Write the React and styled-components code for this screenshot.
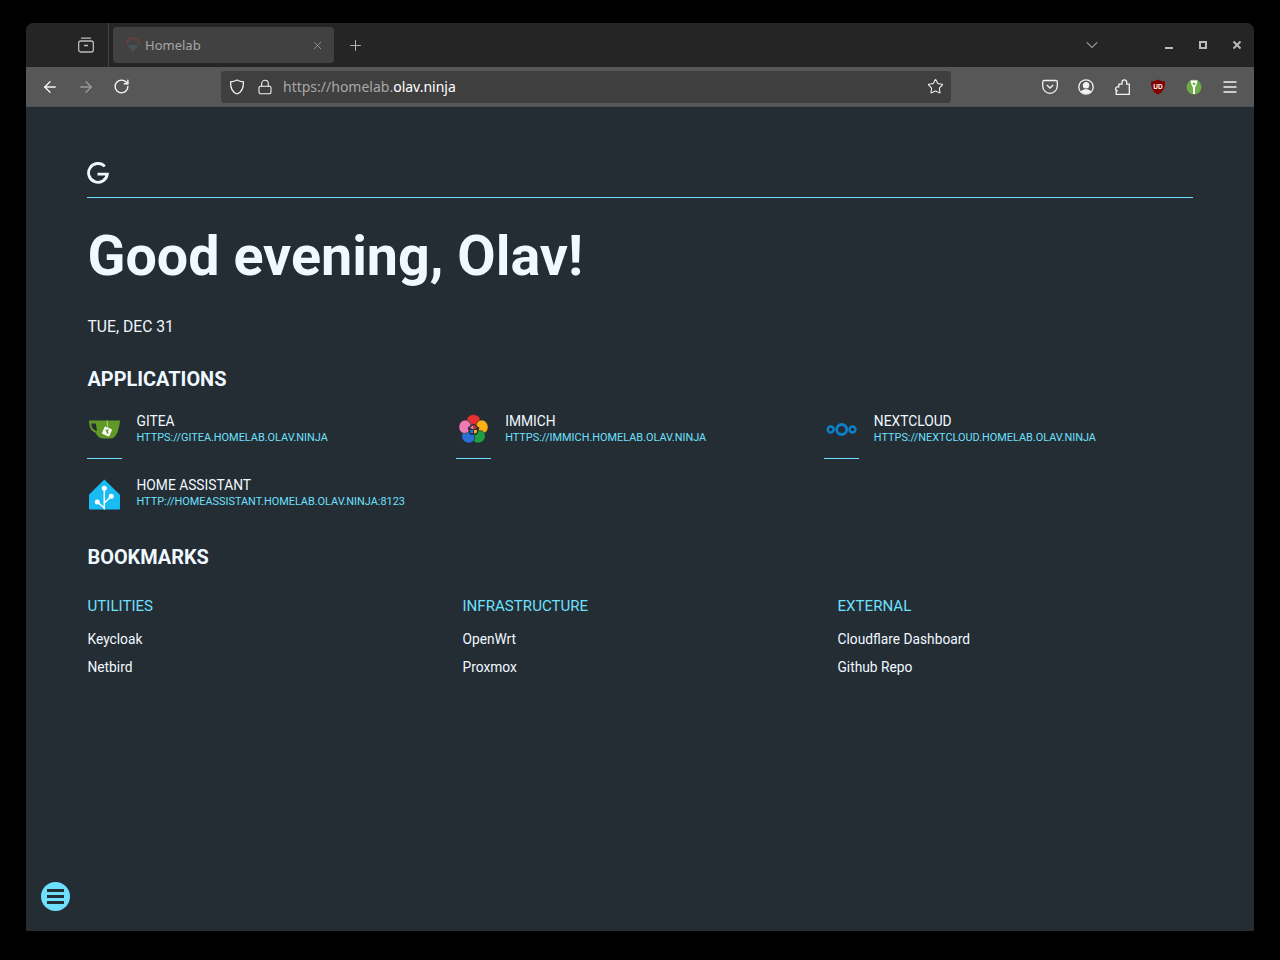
import React from 'react';
import styled, { createGlobalStyle } from 'styled-components';
import { ArrowLeft, ArrowRight, RotateCw, Lock, Star, Plus, X, ChevronDown } from 'lucide-react';

const ACCENT = '#6ee0fd';
const PAGE_BG = '#242c34';
const TEXT = '#f0f9ff';

const GlobalStyle = createGlobalStyle`
  * { margin: 0; padding: 0; box-sizing: border-box; }
  html, body { background: #000; }
  body { font-family: 'Roboto', sans-serif; -webkit-font-smoothing: antialiased; }
`;

const Screen = styled.div`
  width: 1280px;
  height: 960px;
  padding: 23px 26px 29px;
  background: #000;
`;

const Window = styled.div`
  height: 100%;
  display: flex;
  flex-direction: column;
  border-radius: 8px 8px 0 0;
  overflow: hidden;
  background: ${PAGE_BG};
`;

const TitleBar = styled.div`
  height: 44px;
  flex: none;
  display: flex;
  align-items: center;
  background: #252525;
  color: #bdbdbd;
`;

const PinnedArea = styled.div`
  width: 83px;
  height: 100%;
  flex: none;
  display: flex;
  align-items: center;
  justify-content: flex-end;
  padding-right: 14px;
  border-right: 1px solid #414141;
`;

const Tab = styled.div`
  width: 221px;
  height: 36px;
  margin-left: 4px;
  padding: 0 10px 0 12px;
  display: flex;
  align-items: center;
  gap: 4px;
  border-radius: 4px;
  background: #414141;
  color: #a6a6a6;
  font-family: 'Noto Sans', sans-serif;
  font-size: 13px;
`;

const TabLabel = styled.span`
  flex: 1;
`;

const NewTab = styled.div`
  margin-left: 13px;
  display: flex;
  color: #b4b4b4;
`;

const TitleRight = styled.div`
  margin-left: auto;
  display: flex;
  align-items: center;
  padding-right: 12px;
`;

const ListTabs = styled.div`
  display: flex;
  margin-right: 62px;
  color: #909090;
`;

const WinControls = styled.div`
  display: flex;
  align-items: center;
  gap: 24px;
  color: #bababa;
`;

const ToolBar = styled.div`
  height: 40px;
  flex: none;
  display: flex;
  align-items: center;
  padding-left: 15px;
  background: #575757;
  border-bottom: 1px solid #4f4f4f;
`;

const NavGroup = styled.div`
  width: 180px;
  flex: none;
  display: flex;
  align-items: center;
  gap: 18px;
`;

const NavIcon = styled.span`
  display: flex;
  color: ${p => (p.$dim ? '#9a9a9a' : '#f4f4f4')};
`;

const UrlBar = styled.div`
  width: 730px;
  height: 32px;
  flex: none;
  display: flex;
  align-items: center;
  padding: 0 7px 0 8px;
  border-radius: 4px;
  background: #3f3f3f;
  color: #f2f2f2;
`;

const UrlText = styled.div`
  flex: 1;
  margin-left: 10px;
  font-family: 'Noto Sans', sans-serif;
  font-size: 14px;
  color: #ffffff;
  white-space: nowrap;
`;

const UrlDim = styled.span`
  color: #a8a8a8;
`;

const UrlLockGap = styled.span`
  display: flex;
  margin-left: 12px;
`;

const ToolIcons = styled.div`
  margin-left: auto;
  padding-right: 16px;
  display: flex;
  align-items: center;
  gap: 20px;
  color: #f2f2f2;
`;

const Page = styled.main`
  position: relative;
  flex: 1;
  padding: 53px 61px 0;
  color: ${TEXT};
  background: ${PAGE_BG};
`;

const LogoRow = styled.div`
  height: 38px;
  padding-top: 2px;
  border-bottom: 1px solid ${ACCENT};
`;

const Greeting = styled.h1`
  margin-top: 26px;
  height: 64px;
  padding-left: 0.5px;
  font-size: 55.65px;
  line-height: 64px;
  font-weight: 700;
  color: ${TEXT};
`;

const DateLine = styled.div`
  margin-top: 29px;
  height: 20px;
  padding-left: 0.5px;
  font-size: 15.7px;
  line-height: 20px;
  color: ${TEXT};
`;

const SectionTitle = styled.h2`
  height: 26px;
  margin-top: ${p => p.$top}px;
  padding-left: 0.5px;
  font-size: 19.9px;
  line-height: 26px;
  font-weight: 700;
  color: ${TEXT};
`;

const AppGrid = styled.div`
  margin-top: 15px;
  display: grid;
  grid-template-columns: repeat(3, 1fr);
`;

const AppItem = styled.div`
  height: 64px;
  &:last-child::after { display: none; }
  &::after {
    content: '';
    display: block;
    width: 35px;
    height: 1px;
    margin-top: 10px;
    background: ${ACCENT};
  }
`;

const AppRow = styled.div`
  height: 40px;
  display: flex;
  align-items: center;
`;

const AppIcon = styled.div`
  width: 49.5px;
  flex: none;
  display: flex;
  padding: 2px 0 0 1px;
`;

const AppText = styled.div`
  align-self: flex-start;
  padding-top: 5px;
`;

const AppName = styled.div`
  font-size: 13.8px;
  line-height: 17px;
  font-weight: 400;
  color: ${TEXT};
`;

const AppUrl = styled.div`
  margin-top: 1px;
  font-size: 10.9px;
  line-height: 14px;
  color: ${ACCENT};
`;

const BookmarkGrid = styled.div`
  margin-top: 25px;
  padding-left: 0.5px;
  display: grid;
  grid-template-columns: repeat(3, 1fr);
  column-gap: 19.5px;
`;

const GroupTitle = styled.h3`
  margin-bottom: 9px;
  font-size: 15.1px;
  line-height: 20px;
  font-weight: 400;
  color: ${ACCENT};
`;

const BookmarkLink = styled.div`
  height: 28px;
  font-size: 13.75px;
  line-height: 28px;
  color: ${TEXT};
`;

const MenuButton = styled.div`
  position: absolute;
  left: 15px;
  bottom: 20px;
  width: 29px;
  height: 29px;
  border-radius: 50%;
  background: ${ACCENT};
  display: flex;
  flex-direction: column;
  align-items: center;
  justify-content: center;
  gap: 3px;
`;

const MenuBar = styled.span`
  width: 17px;
  height: 3px;
  background: ${PAGE_BG};
`;

const apps = [
  { name: 'Gitea', url: 'https://gitea.homelab.olav.ninja', Icon: GiteaIcon },
  { name: 'Immich', url: 'https://immich.homelab.olav.ninja', Icon: ImmichIcon },
  { name: 'Nextcloud', url: 'https://nextcloud.homelab.olav.ninja', Icon: NextcloudIcon },
  { name: 'Home Assistant', url: 'http://homeassistant.homelab.olav.ninja:8123', Icon: HomeAssistantIcon },
];

const bookmarks = [
  { title: 'Utilities', links: ['Keycloak', 'Netbird'] },
  { title: 'Infrastructure', links: ['OpenWrt', 'Proxmox'] },
  { title: 'External', links: ['Cloudflare Dashboard', 'Github Repo'] },
];

const petalColors = ['#e8322f', '#fbb116', '#1f9e45', '#2a6fd6', '#ef7bb4'];

function LogoG() {
  return (
    <svg width="22" height="22" viewBox="0 0 22 22" fill="none" stroke={TEXT} strokeWidth="2.8" style={{ display: 'block' }}>
      <path d="M17.8 4.400A9.400 9.400 0 1 0 20.300 12.200H10.500" />
    </svg>
  );
}

function GiteaIcon() {
  return (
    <svg width="33" height="33" viewBox="0 0 33 33">
      <path d="M1 7.500H32C31.500 14 29 25.500 23 25.500H15C11 25.500 9 22.500 7.300 19.500 3 18.500 1 14 1 7.500z" fill="#609926" />
      <path d="M3.300 10.600H7.800L9 18C5.500 17.500 3.300 14 3.300 10.600z" fill={PAGE_BG} />
      <path d="M19 7.500l.5 6" stroke="#dfe8d2" strokeWidth="0.700" />
      <rect x="15" y="14.500" width="8" height="8" rx="1.200" fill="#fff" transform="rotate(24 19 18.500)" />
      <path d="M17.700 16.600l2.600 3.800M20.200 16.200l-1.200 4.400" stroke="#609926" strokeWidth="1.100" />
    </svg>
  );
}

function ImmichIcon() {
  return (
    <svg width="33" height="33" viewBox="0 0 33 33">
      {petalColors.map((color, i) => (
        <ellipse key={color} cx="16.500" cy="7.500" rx="6.800" ry="6" fill={color} stroke={PAGE_BG} strokeWidth="0.600" transform={`rotate(${i * 72} 16.500 16.500)`} />
      ))}
      <path d="M16.500 10.500l5.900 4.300-2.300 6.900h-7.200l-2.300-6.900z" fill={PAGE_BG} />
      <path d="M16.500 12l-3.800 2.800 3.800 1.700z" fill="#ef7bb4" />
      <path d="M16.500 12l3.800 2.800-3.800 1.700z" fill="#e8322f" />
      <path d="M17 17h3.300l-1 3.300h-2.300z" fill="#fbb116" />
      <path d="M16 17h-3.300l1 3.300h2.300z" fill="#2a6fd6" />
    </svg>
  );
}

function NextcloudIcon() {
  return (
    <svg width="33" height="33" viewBox="0 0 33 33" fill="none" stroke="#0b82c9">
      <circle cx="16.700" cy="16.500" r="5" strokeWidth="2.800" />
      <circle cx="5.700" cy="16.500" r="3" strokeWidth="2.400" />
      <circle cx="27.500" cy="16.500" r="3" strokeWidth="2.400" />
    </svg>
  );
}

function HomeAssistantIcon() {
  return (
    <svg width="33" height="33" viewBox="0 0 33 33">
      <path d="M16.300 2.500L32 17.800V31.500a1 1 0 0 1-1 1H2a1 1 0 0 1-1-1V17.800z" fill="#18bcf2" />
      <path d="M16.300 11v21.500M16.300 31l-7-6M16.300 26l7-6.800" stroke="#fff" strokeWidth="1.500" fill="none" />
      <circle cx="16.300" cy="11.200" r="2.500" fill="#fff" />
      <circle cx="9.300" cy="25" r="2.500" fill="#fff" />
      <circle cx="23.300" cy="19.200" r="2.500" fill="#fff" />
    </svg>
  );
}

function TabFavicon() {
  return (
    <svg width="16" height="16" viewBox="0 0 16 16" fill="none" opacity="0.65">
      <path d="M2 7a6 6 0 0 1 12 0" stroke="#7a4040" strokeWidth="2" />
      <path d="M2 8h12l-6 7z" fill="#4a5a66" />
    </svg>
  );
}

function FirefoxView() {
  return (
    <svg width="16" height="16" viewBox="0 0 16 16" fill="none" stroke="#bdbdbd" strokeWidth="1.300">
      <path d="M3 1.200h10" />
      <rect x="0.700" y="4" width="14.600" height="11" rx="2" />
      <path d="M6 8.500h4" />
    </svg>
  );
}

function ShieldIcon() {
  return (
    <svg width="16" height="16" viewBox="0 0 16 16" fill="none" stroke="currentColor" strokeWidth="1.300">
      <path d="M8 1c2 1.200 4 1.700 6.400 1.900.2 6-1.800 10.300-6.400 12.100C3.400 13.200 1.400 8.900 1.600 2.900 4 2.700 6 2.200 8 1z" />
    </svg>
  );
}

function PocketIcon() {
  return (
    <svg width="16" height="16" viewBox="0 0 16 16" fill="none" stroke="currentColor" strokeWidth="1.300">
      <path d="M2 1.500h12a1.300 1.300 0 0 1 1.300 1.300V7a7.300 7.300 0 0 1-14.600 0V2.800A1.300 1.300 0 0 1 2 1.500z" />
      <path d="M4.800 6L8 9l3.200-3" />
    </svg>
  );
}

function AccountIcon() {
  return (
    <svg width="16" height="16" viewBox="0 0 16 16" fill="none" stroke="currentColor" strokeWidth="1.300">
      <circle cx="8" cy="8" r="7.200" />
      <circle cx="8" cy="6.300" r="2.600" fill="currentColor" />
      <path d="M2.900 12.600C4 10.800 6 10.300 8 10.300s4 .5 5.100 2.300C12 14 10 15 8 15s-4-1-5.100-2.400z" fill="currentColor" stroke="none" />
    </svg>
  );
}

function ExtensionIcon() {
  return (
    <svg width="16" height="16" viewBox="0 0 16 16" fill="none" stroke="currentColor" strokeWidth="1.300">
      <path d="M2.200 15.300H15.300V5.200H12.700V3.300C12.700 0 8 0 8 3.300V5.200H4.800V7.800H3.800C.9 7.800.9 11.800 3.800 11.800H2.200z" />
    </svg>
  );
}

function UBlockIcon() {
  return (
    <svg width="16" height="16" viewBox="0 0 16 16">
      <path d="M8 .5c2.200 1.300 4.300 1.800 7 2 .1 6.400-2 10.700-7 13C3 13.200.9 8.900 1 2.500c2.700-.2 4.800-.7 7-2z" fill="#800000" />
      <text x="8" y="9.800" textAnchor="middle" fontFamily="Liberation Sans, sans-serif" fontWeight="700" fontSize="6.500" fill="#fff">UD</text>
    </svg>
  );
}

function KiwixIcon() {
  return (
    <svg width="16" height="16" viewBox="0 0 16 16">
      <circle cx="8" cy="8" r="7.500" fill="#6cab48" />
      <path d="M4.500 1.500C5 5 6 7 7 8.500V15h2V8.500c1-1.500 2-3.500 2.500-7z" fill="#fff" />
      <circle cx="8" cy="4.800" r="1.400" fill="#6cab48" />
    </svg>
  );
}

function Hamburger() {
  return (
    <svg width="16" height="16" viewBox="0 0 16 16" stroke="currentColor" strokeWidth="1.300">
      <path d="M1.500 3h13M1.500 8h13M1.500 13h13" />
    </svg>
  );
}

function Minimize() {
  return (
    <svg width="10" height="10" viewBox="0 0 10 10"><path d="M1 8h8" stroke="currentColor" strokeWidth="2" /></svg>
  );
}

function Maximize() {
  return (
    <svg width="10" height="10" viewBox="0 0 10 10" fill="none"><rect x="2" y="2" width="6" height="6" stroke="currentColor" strokeWidth="2" /></svg>
  );
}

function CloseWin() {
  return (
    <svg width="10" height="10" viewBox="0 0 10 10"><path d="M1.500 1.500l7 7M8.500 1.500l-7 7" stroke="currentColor" strokeWidth="2" /></svg>
  );
}

export default function App() {
  return (
    <>
      <GlobalStyle />
      <Screen>
        <Window>
          <TitleBar>
            <PinnedArea><FirefoxView /></PinnedArea>
            <Tab>
              <TabFavicon />
              <TabLabel>Homelab</TabLabel>
              <X size={13} strokeWidth={1.3} color="#b0b0b0" />
            </Tab>
            <NewTab><Plus size={17} strokeWidth={1.4} /></NewTab>
            <TitleRight>
              <ListTabs><ChevronDown size={20} strokeWidth={1.3} /></ListTabs>
              <WinControls>
                <Minimize />
                <Maximize />
                <CloseWin />
              </WinControls>
            </TitleRight>
          </TitleBar>

          <ToolBar>
            <NavGroup>
              <NavIcon><ArrowLeft size={18} strokeWidth={1.8} /></NavIcon>
              <NavIcon $dim><ArrowRight size={18} strokeWidth={1.8} /></NavIcon>
              <NavIcon><RotateCw size={17} strokeWidth={2} /></NavIcon>
            </NavGroup>
            <UrlBar>
              <ShieldIcon />
              <UrlLockGap><Lock size={16} strokeWidth={1.6} /></UrlLockGap>
              <UrlText><UrlDim>https://homelab.</UrlDim>olav.ninja</UrlText>
              <Star size={17} strokeWidth={1.5} />
            </UrlBar>
            <ToolIcons>
              <PocketIcon />
              <AccountIcon />
              <ExtensionIcon />
              <UBlockIcon />
              <KiwixIcon />
              <Hamburger />
            </ToolIcons>
          </ToolBar>

          <Page>
            <LogoRow><LogoG /></LogoRow>
            <Greeting>Good evening, Olav!</Greeting>
            <DateLine>TUE, DEC 31</DateLine>

            <SectionTitle $top={30}>APPLICATIONS</SectionTitle>
            <AppGrid>
              {apps.map(({ name, url, Icon }) => (
                <AppItem key={name}>
                  <AppRow>
                    <AppIcon><Icon /></AppIcon>
                    <AppText>
                      <AppName>{name.toUpperCase()}</AppName>
                      <AppUrl>{url.toUpperCase()}</AppUrl>
                    </AppText>
                  </AppRow>
                </AppItem>
              ))}
            </AppGrid>

            <SectionTitle $top={9}>BOOKMARKS</SectionTitle>
            <BookmarkGrid>
              {bookmarks.map(group => (
                <div key={group.title}>
                  <GroupTitle>{group.title.toUpperCase()}</GroupTitle>
                  {group.links.map(link => <BookmarkLink key={link}>{link}</BookmarkLink>)}
                </div>
              ))}
            </BookmarkGrid>

            <MenuButton>
              <MenuBar /><MenuBar /><MenuBar />
            </MenuButton>
          </Page>
        </Window>
      </Screen>
    </>
  );
}
